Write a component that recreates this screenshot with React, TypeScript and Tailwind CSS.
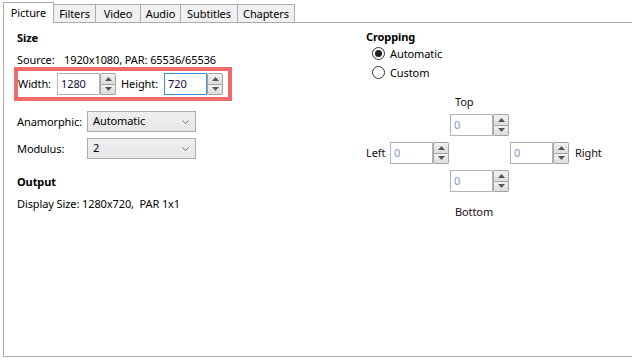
import React from "react";

const tabs = [
  { label: "Picture", w: "w-[51px]" },
  { label: "Filters", w: "w-[42px]" },
  { label: "Video", w: "w-[45px]" },
  { label: "Audio", w: "w-[40px]" },
  { label: "Subtitles", w: "w-[57px]" },
  { label: "Chapters", w: "w-[57px]" },
];

function Spinner() {
  return (
    <div className="flex flex-col w-[16px] h-[22px]">
      <div className="flex-1 flex items-center justify-center border border-[#a3a3a3] rounded-t-[2px] bg-gradient-to-b from-[#f2f2f2] to-[#dcdcdc]">
        <svg width="7" height="4" viewBox="0 0 7 4">
          <path d="M0 4 L3.5 0 L7 4 Z" fill="#555" />
        </svg>
      </div>
      <div className="flex-1 flex items-center justify-center border border-t-0 border-[#a3a3a3] rounded-b-[2px] bg-gradient-to-b from-[#f2f2f2] to-[#dcdcdc]">
        <svg width="7" height="4" viewBox="0 0 7 4">
          <path d="M0 0 L7 0 L3.5 4 Z" fill="#555" />
        </svg>
      </div>
    </div>
  );
}

interface NumBoxProps {
  value: string;
  focused?: boolean;
  dim?: boolean;
}

function NumBox({ value, focused, dim }: NumBoxProps) {
  return (
    <div className="flex">
      <div
        className={`w-[43px] h-[22px] border flex items-center pl-[3px] bg-white ${
          focused ? "border-[#3c8ee0]" : "border-[#b4b4b4]"
        } ${dim ? "text-[#7e97c7]" : "text-[#1b0838]"}`}
      >
        {value}
      </div>
      <Spinner />
    </div>
  );
}

function Select({ value }: { value: string }) {
  return (
    <div className="w-[109px] h-[21px] border border-[#acacac] bg-gradient-to-b from-[#f0f0f0] to-[#e6e6e6] flex items-center justify-between pl-[5px] pr-[6px]">
      <span className="-mt-[1px]">{value}</span>
      <svg width="7" height="4" viewBox="0 0 7 4">
        <path d="M0.5 0.5 L3.5 3.5 L6.5 0.5" stroke="#707070" fill="none" />
      </svg>
    </div>
  );
}

function Radio({ checked, label }: { checked?: boolean; label: string }) {
  return (
    <div className="flex items-center gap-[5px] h-[19px]">
      <div className="w-[13px] h-[13px] rounded-full border border-[#333] bg-white flex items-center justify-center">
        {checked && <div className="w-[7px] h-[7px] rounded-full bg-[#222]" />}
      </div>
      <span>{label}</span>
    </div>
  );
}

export default function App() {
  return (
    <div className="w-[632px] h-[361px] bg-white overflow-hidden text-[11px] leading-[16px] tracking-[-0.1px] text-black font-['Segoe_UI','Noto_Sans',sans-serif]">
      {/* tab strip */}
      <div className="flex items-end h-[23px] border-b border-[#acacac] ml-[3px] -mr-[10px] relative">
        {tabs.map((t, i) =>
          i === 0 ? (
            <div
              key={t.label}
              className={`${t.w} h-[21px] -mb-px flex justify-center pt-[2px] bg-white border border-b-0 border-[#acacac] relative z-10`}
            >
              {t.label}
            </div>
          ) : (
            <div
              key={t.label}
              className={`${t.w} h-[18px] bg-[#f0f0f0] border border-l-0 border-b-0 border-[#acacac] flex items-center justify-center`}
            >
              {t.label}
            </div>
          )
        )}
      </div>

      {/* panel */}
      <div className="ml-[3px] w-[640px] h-[334px] border-l border-b border-[#acacac] flex">
        <div className="w-[362px] pl-[13px] pt-[7px] flex flex-col">
          <div className="font-bold">Size</div>
          <div className="mt-[6px] flex">
            <span className="w-[47px]">Source:</span>
            <span>1920x1080, PAR: 65536/65536</span>
          </div>
          <div className="-mt-px -ml-[3px] w-[218px] h-[34px] border-4 border-[#f26a6a] flex items-center">
            <span className="w-[39px]">Width:</span>
            <NumBox value="1280" />
            <span className="ml-[5px] w-[43px]">Height:</span>
            <NumBox value="720" focused />
          </div>
          <div className="mt-[10px] flex items-center h-[21px]">
            <span className="w-[70px]">Anamorphic:</span>
            <Select value="Automatic" />
          </div>
          <div className="mt-[6px] flex items-center h-[21px]">
            <span className="w-[70px]">Modulus:</span>
            <Select value="2" />
          </div>
          <div className="mt-[15px] font-bold">Output</div>
          <div className="mt-[6px]">Display Size: 1280x720,&nbsp; PAR 1x1</div>
        </div>

        <div className="pt-[6px] flex flex-col">
          <div className="font-bold">Cropping</div>
          <div className="ml-[6px] -mt-px flex flex-col">
            <Radio checked label="Automatic" />
            <Radio label="Custom" />
          </div>
          <div className="mt-[12px] grid grid-cols-[24px_60px_60px_60px_auto] grid-rows-[14px_22px_22px_22px_26px] gap-y-[6px] text-[#1a0a1a]">
            <div className="col-start-3 row-start-1 pl-[5px]">Top</div>
            <div className="col-start-3 row-start-2">
              <NumBox value="0" dim />
            </div>
            <div className="col-start-1 row-start-3 flex items-center">Left</div>
            <div className="col-start-2 row-start-3">
              <NumBox value="0" dim />
            </div>
            <div className="col-start-4 row-start-3">
              <NumBox value="0" dim />
            </div>
            <div className="col-start-5 row-start-3 flex items-center pl-[5px]">Right</div>
            <div className="col-start-3 row-start-4">
              <NumBox value="0" dim />
            </div>
            <div className="col-start-3 row-start-5 pl-[5px] pt-[6px]">Bottom</div>
          </div>
        </div>
      </div>
    </div>
  );
}
